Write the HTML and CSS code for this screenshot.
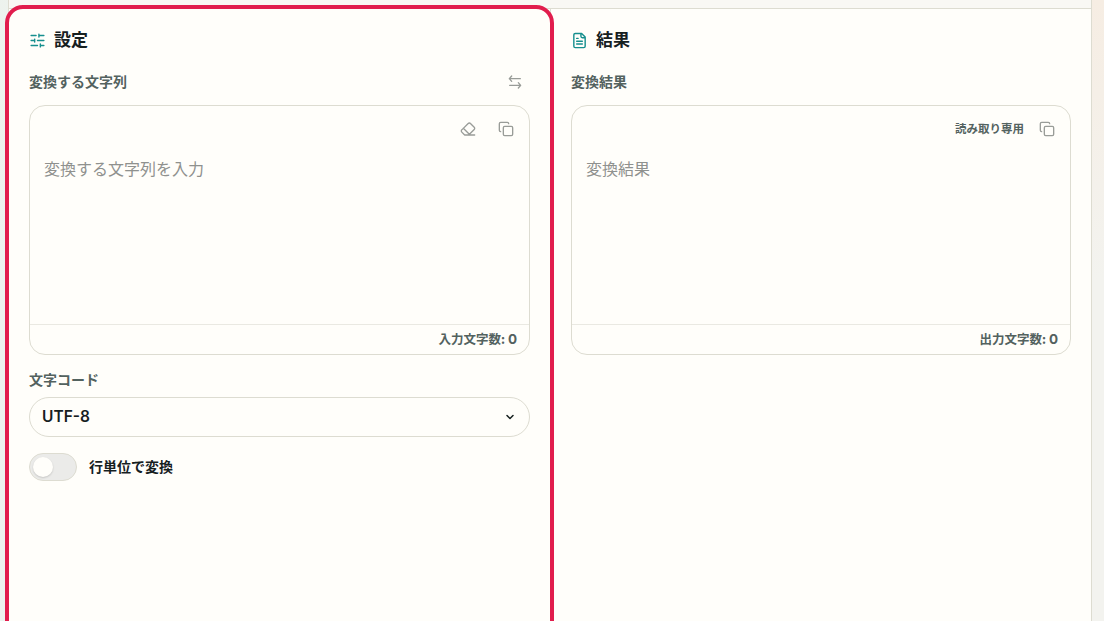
FILE: index.html
```
<!DOCTYPE html>
<html lang="ja">

<head>
    <meta charset="UTF-8">
    <meta name="viewport" content="width=device-width, initial-scale=1.0">
    <title>文字列変換</title>
    <link rel="stylesheet" href="styles.css">
</head>

<body>
    <main class="tool">
        <div class="tool-top"></div>
        <div class="panels">
            <section class="panel">
                <h2>
                    <svg class="icon title-icon" viewBox="0 0 24 24"><path d="M10 5H3M12 19H3M14 3v4M16 17v4M21 12h-9M21 19h-5M21 5h-7M8 10v4M8 12H3"/></svg>
                    設定
                </h2>
                <div class="label-row">
                    <label for="source">変換する文字列</label>
                    <button type="button" class="swap" aria-label="入れ替え">
                        <svg class="icon" viewBox="0 0 24 24"><path d="M7 3 3.500 7 7 11M3.500 7H20M17 13l3.500 4-3.500 4M20.500 17H4"/></svg>
                    </button>
                </div>
                <div class="editor">
                    <div class="editor-tools">
                        <button type="button" aria-label="クリア">
                            <svg class="icon" viewBox="0 0 24 24"><path d="m7 21-4.300-4.300c-1-1-1-2.500 0-3.400l9.600-9.600c1-1 2.500-1 3.400 0l5.600 5.600c1 1 1 2.500 0 3.400L13 21M22 21H7M5 11l9 9"/></svg>
                        </button>
                        <button type="button" aria-label="コピー">
                            <svg class="icon" viewBox="0 0 24 24"><rect x="8" y="8" width="14" height="14" rx="2"/><path d="M4 16c-1.100 0-2-.9-2-2V4c0-1.100.9-2 2-2h10c1.100 0 2 .9 2 2"/></svg>
                        </button>
                    </div>
                    <textarea id="source" placeholder="変換する文字列を入力"></textarea>
                    <div class="editor-count">入力文字数: <span class="latin">0</span></div>
                </div>
                <label class="field-label" for="charset">文字コード</label>
                <div class="select" id="charset">
                    <span class="latin">UTF-8</span>
                    <svg class="icon chevron" viewBox="0 0 24 24"><path d="m6 9 6 6 6-6"/></svg>
                </div>
                <div class="switch-row">
                    <span class="switch"></span>
                    <span>行単位で変換</span>
                </div>
            </section>

            <section class="panel">
                <h2>
                    <svg class="icon title-icon" viewBox="0 0 24 24"><path d="M15 2H6a2 2 0 0 0-2 2v16a2 2 0 0 0 2 2h12a2 2 0 0 0 2-2V7ZM14 2v4a2 2 0 0 0 2 2h4M10 9H8M16 13H8M16 17H8"/></svg>
                    結果
                </h2>
                <div class="label-row">
                    <label for="result">変換結果</label>
                </div>
                <div class="editor">
                    <div class="editor-tools">
                        <span class="readonly">読み取り専用</span>
                        <button type="button" aria-label="コピー">
                            <svg class="icon" viewBox="0 0 24 24"><rect x="8" y="8" width="14" height="14" rx="2"/><path d="M4 16c-1.100 0-2-.9-2-2V4c0-1.100.9-2 2-2h10c1.100 0 2 .9 2 2"/></svg>
                        </button>
                    </div>
                    <textarea id="result" placeholder="変換結果" readonly></textarea>
                    <div class="editor-count">出力文字数: <span class="latin">0</span></div>
                </div>
            </section>
        </div>
        <div class="highlight"></div>
    </main>
</body>

</html>
```

FILE: styles.css
```
* {
    box-sizing: border-box;
}

body {
    margin: 0;
    height: 621px;
    overflow: hidden;
    padding: 0 12px 0 8px;
    font-family: "Noto Sans CJK JP", sans-serif;
    color: #16201f;
    background: linear-gradient(90deg, rgba(236, 243, 239, 0.9), rgba(236, 243, 239, 0) 50%),
        linear-gradient(#f6ede3, #f3f3ef 45%);
}

/* Page card */
.tool {
    position: relative;
    display: flex;
    flex-direction: column;
    height: 100%;
    border: 1px solid #dddcd1;
    border-width: 0 1px;
    background: #fffefa;
}

.tool-top {
    height: 9px;
    background: #f9f8f4;
    border-bottom: 1px solid #dddcd1;
}

.panels {
    flex: 1;
    display: grid;
    grid-template-columns: 542px 540px;
}

.panel {
    padding: 20px;
}

.panel:first-child {
    border-right: 1px solid #dddcd1;
}

/* Titles and labels */
h2 {
    display: flex;
    align-items: center;
    gap: 8px;
    height: 20px;
    margin: 0 0 17px;
    font-size: 17px;
    line-height: 20px;
}

.label-row {
    display: flex;
    align-items: center;
    justify-content: space-between;
    height: 32px;
    margin-bottom: 7px;
}

label {
    padding-bottom: 2px;
    font-size: 14px;
    font-weight: bold;
    line-height: 20px;
    color: #53625f;
}

.latin {
    font-family: Inter, sans-serif;
}

/* Icons */
.icon {
    width: 16px;
    height: 16px;
    display: block;
    fill: none;
    stroke: currentColor;
    stroke-width: 2;
    stroke-linecap: round;
    stroke-linejoin: round;
}

.title-icon {
    width: 17px;
    height: 17px;
    margin-top: 2px;
    color: #168f8e;
}

button {
    display: flex;
    align-items: center;
    justify-content: center;
    width: 30px;
    height: 30px;
    padding: 0;
    border: none;
    background: none;
    color: #999c98;
}

/* Text boxes */
.editor {
    display: flex;
    flex-direction: column;
    height: 250px;
    border: 1px solid #dddcd1;
    border-radius: 16px;
    background: #fffefa;
}

.editor-tools {
    display: flex;
    align-items: center;
    justify-content: flex-end;
    gap: 8px;
    height: 46px;
    padding-right: 8px;
}

.readonly {
    padding-bottom: 2px;
    font-size: 11.5px;
    font-weight: bold;
    color: #53625f;
}

textarea {
    flex: 1;
    padding: 4px 14px;
    border: none;
    outline: none;
    resize: none;
    background: none;
    font: 16px/24px "Noto Sans CJK JP", sans-serif;
}

textarea::placeholder {
    color: #8f918e;
}

.editor-count {
    height: 30px;
    padding-right: 12px;
    border-top: 1px solid #eae9e2;
    font-size: 12.5px;
    font-weight: bold;
    line-height: 28px;
    text-align: right;
    color: #53625f;
}

.editor-count .latin {
    font-size: 13.5px;
}

/* Options */
.field-label {
    display: block;
    margin: 14px 0 6px;
}

.select {
    display: flex;
    align-items: center;
    justify-content: space-between;
    height: 40px;
    padding: 0 13px 0 12px;
    border: 1px solid #dddcd1;
    border-radius: 20px;
    font-size: 15.5px;
    font-weight: 600;
}

.select .latin {
    padding-bottom: 2px;
}

.chevron {
    width: 12px;
    height: 12px;
    stroke-width: 3;
}

.switch-row {
    display: flex;
    align-items: center;
    gap: 12px;
    margin-top: 16px;
    font-size: 14px;
    font-weight: bold;
    line-height: 26px;
}

.switch-row span:last-child {
    padding-bottom: 2px;
}

.switch {
    width: 48px;
    height: 28px;
    padding: 3px;
    border: 1px solid #dddcd1;
    border-radius: 14px;
    background: #ebebe9;
}

.switch::before {
    content: "";
    display: block;
    width: 20px;
    height: 20px;
    border-radius: 50%;
    background: #fffefa;
    box-shadow: 0 1px 2px rgba(0, 0, 0, 0.16);
}

/* Frame drawn over the settings panel */
.highlight {
    position: absolute;
    top: 5px;
    left: -4px;
    width: 549px;
    height: 640px;
    border: 4px solid #e11d4d;
    border-radius: 18px;
}
```
